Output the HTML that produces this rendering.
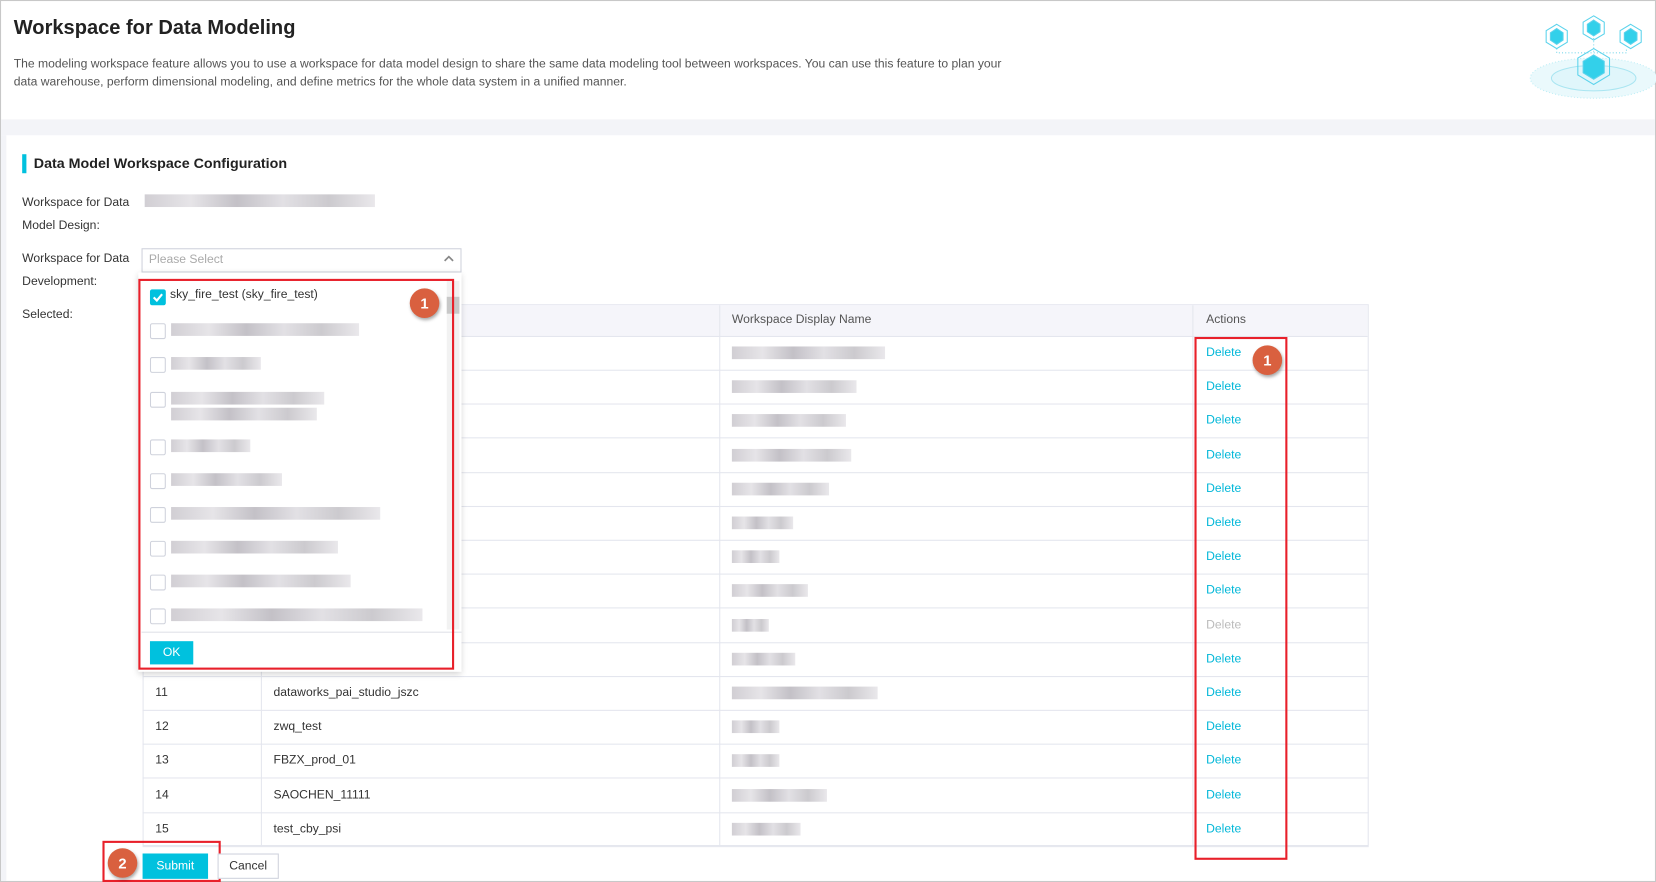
<!DOCTYPE html>
<html><head><meta charset="utf-8">
<style>
html,body{margin:0;padding:0;width:1656px;height:882px;overflow:hidden;background:#fff}
#w{position:absolute;left:0;top:0;width:1568px;height:835px;transform:scale(1.05612,1.0563);transform-origin:0 0;font-family:"Liberation Sans",sans-serif;color:#333;font-size:11.5px}
.a{position:absolute}
.blur{position:absolute;height:12px;background:linear-gradient(90deg,#c9c6cc,#e2e0e4 20%,#b9b6bd 40%,#dddbe0 60%,#c3c1c6 80%,#e6e4e8);opacity:.85}
.cb{position:absolute;width:13px;height:13px;border:1px solid #cfd2dc;border-radius:2px;background:#fff}
.row{position:absolute;left:135px;width:1161px;height:32px;border-bottom:1px solid #e4e6ee}
.c{position:absolute;top:0;height:32px;line-height:32px;font-size:11.5px}
.del{color:#00b7d8}
.badge{position:absolute;width:28px;height:28px;border-radius:50%;background:#d9603f;color:#fff;font-weight:bold;font-size:14px;text-align:center;line-height:28px;box-shadow:1px 2px 3px rgba(0,0,0,.35)}
.red{position:absolute;border:2px solid #e8202a}
</style></head><body><div id="w">
<div class="a" style="left:0;top:0;width:1566px;height:833px;border:1px solid #c8c8c8"></div>
<div class="a" style="left:1px;top:113px;width:1566px;height:15px;background:#f3f4f8"></div>
<div class="a" style="left:1px;top:128px;width:5px;height:706px;background:#f3f4f8"></div>
<div class="a" style="left:13px;top:16px;font-size:19px;font-weight:bold;color:#222">Workspace for Data Modeling</div>
<div class="a" style="left:13px;top:53px;width:960px;font-size:11.5px;line-height:17px;color:#555">The modeling workspace feature allows you to use a workspace for data model design to share the same data modeling tool between workspaces. You can use this feature to plan your data warehouse, perform dimensional modeling, and define metrics for the whole data system in a unified manner.</div>
<svg class="a" style="left:1445px;top:10px" width="125" height="85" viewBox="0 0 125 85">
<ellipse cx="64" cy="64" rx="60" ry="19" fill="#eaf9fc" stroke="#bfeef6" stroke-dasharray="1 2"/>
<ellipse cx="64" cy="64" rx="40" ry="12" fill="#e0f6fb" stroke="#a9e5f1"/>
<path d="M29 36V40H95V36M64 20V40" stroke="#7fd9ec" stroke-dasharray="1 2" fill="none"/>
<g fill="#33d0ea" stroke="#5bd3ec"><path d="M29 13l10 6v11l-10 6-10-6V19z" fill="none"/><path d="M29 17l6 4v7l-6 4-6-4v-7z"/>
<path d="M64 5l10 6v11l-10 6-10-6V11z" fill="none"/><path d="M64 9l6 4v7l-6 4-6-4v-7z"/>
<path d="M99 13l10 6v11l-10 6-10-6V19z" fill="none"/><path d="M99 17l6 4v7l-6 4-6-4v-7z"/>
<path d="M64 36l15 9v16l-15 9-15-9V45z" fill="none"/><path d="M64 42l10 6v11l-10 6-10-6V48z"/></g>
</svg>
<div class="a" style="left:21px;top:146px;width:4px;height:18px;background:#00c1de"></div>
<div class="a" style="left:32px;top:147px;font-size:13.5px;font-weight:bold;color:#222">Data Model Workspace Configuration</div>
<div class="a" style="left:21px;top:186px">Workspace for Data</div>
<div class="a" style="left:21px;top:208px">Model Design:</div>
<div class="blur" style="left:137px;top:184px;width:218px"></div>
<div class="a" style="left:21px;top:239px">Workspace for Data</div>
<div class="a" style="left:21px;top:261px">Development:</div>
<div class="a" style="left:134px;top:235px;width:301px;height:21px;border:1px solid #cfd2dc;background:#fff"></div>
<div class="a" style="left:141px;top:240px;color:#aaa">Please Select</div>
<svg class="a" style="left:419px;top:241px" width="12" height="8"><path d="M2 6l4-4 4 4" stroke="#888" stroke-width="1.6" fill="none"/></svg>
<div class="a" style="left:21px;top:292px">Selected:</div>
<div class="a" style="left:135px;top:288px;width:1161px;height:513px;border:1px solid #e4e6ee;box-sizing:border-box"></div>
<div class="a" style="left:136px;top:289px;width:1159px;height:29px;background:#f5f5fa;border-bottom:1px solid #e4e6ee"></div>
<div class="a" style="left:247px;top:289px;width:1px;height:512px;background:#e4e6ee"></div>
<div class="a" style="left:681px;top:289px;width:1px;height:512px;background:#e4e6ee"></div>
<div class="a" style="left:1129px;top:289px;width:1px;height:512px;background:#e4e6ee"></div>
<div class="a" style="left:693px;top:297px;color:#555">Workspace Display Name</div>
<div class="a" style="left:1142px;top:297px;color:#555">Actions</div>
<div id="rows"></div>
<div class="a" style="left:131px;top:258px;width:306px;height:378px;background:#fff;box-shadow:0 2px 6px rgba(0,0,0,.18)"></div>
<div class="a" style="left:423px;top:266px;width:12px;height:330px;background:#f2f2f2"></div>
<div class="a" style="left:423px;top:281px;width:12px;height:16px;background:#c8c8c8"></div>
<div class="a" style="left:134px;top:598px;width:303px;height:1px;background:#dfe1e8"></div>
<div class="a" style="left:142px;top:607px;width:41px;height:22px;background:#00c1de;color:#fff;text-align:center;line-height:22px">OK</div>
<div class="a" style="left:142px;top:274px;width:15px;height:15px;background:#00c1de;border-radius:2px"></div>
<svg class="a" style="left:142px;top:274px" width="15" height="15"><path d="M3.5 7.5l3 3 5-6" stroke="#fff" stroke-width="2" fill="none"/></svg>
<div class="a" style="left:161px;top:273px">sky_fire_test (sky_fire_test)</div>
<div id="items"></div>
<div class="red" style="left:131px;top:264px;width:295px;height:366px"></div>
<div class="red" style="left:1131px;top:319px;width:84px;height:491px"></div>
<div class="red" style="left:97px;top:796px;width:108px;height:35px"></div>
<div class="a" style="left:135px;top:808px;width:62px;height:24px;background:#00c1de;color:#fff;text-align:center;line-height:24px">Submit</div>
<div class="a" style="left:206px;top:808px;width:56px;height:22px;border:1px solid #cfd2dc;background:#fff;text-align:center;line-height:22px;color:#333">Cancel</div>
<div class="badge" style="left:388px;top:273px">1</div>
<div class="badge" style="left:1186px;top:327px">1</div>
<div class="badge" style="left:102px;top:803px">2</div>
</div>
<script>
var names={11:"dataworks_pai_studio_jszc",12:"zwq_test",13:"FBZX_prod_01",14:"SAOCHEN_11111",15:"test_cby_psi"};
var bw=[145,118,108,113,92,58,45,72,35,60,138,45,45,90,65];
var h="";
for(var i=1;i<=15;i++){var t=318+(i-1)*32.2;
h+='<div class="row" style="top:'+t+'px"><div class="c" style="left:12px">'+(i>10?i:'')+'</div><div class="c" style="left:124px">'+(names[i]||'')+'</div><div class="blur" style="left:558px;top:10px;width:'+bw[i-1]+'px"></div><div class="c del" style="left:1007px;'+(i==9?'color:#bbb':'')+'">Delete</div></div>';}
document.getElementById('rows').innerHTML=h;
var ys=[313,345,378,423,455,487,519,551,583],ws=[178,85,145,75,105,198,158,170,238];h="";
for(var j=0;j<9;j++){h+='<div class="cb" style="left:142px;top:'+(ys[j]-7)+'px"></div><div class="blur" style="left:162px;top:'+(ys[j]-7)+'px;width:'+ws[j]+'px"></div>';
if(j==2)h+='<div class="blur" style="left:162px;top:'+(ys[j]+8)+'px;width:138px"></div>';}
document.getElementById('items').innerHTML=h;
</script>
</body></html>
